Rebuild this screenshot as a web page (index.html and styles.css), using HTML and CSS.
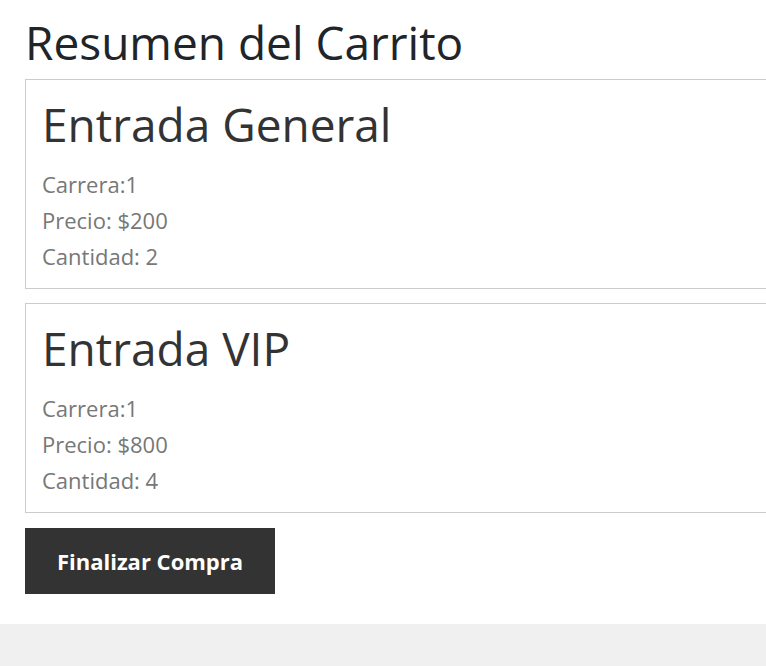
FILE: index.html
```html
<!DOCTYPE html>
<html lang="es">
<head>
<meta charset="utf-8">
<title>Resumen del Carrito</title>
<link rel="stylesheet" href="styles.css">
</head>
<body>
<main class="page">
  <h1 class="title">Resumen del Carrito</h1>
  <section class="card">
    <h2 class="card-title">Entrada General</h2>
    <p class="line">Carrera:1</p>
    <p class="line">Precio: $200</p>
    <p class="line">Cantidad: 2</p>
  </section>
  <section class="card">
    <h2 class="card-title">Entrada VIP</h2>
    <p class="line">Carrera:1</p>
    <p class="line">Precio: $800</p>
    <p class="line">Cantidad: 4</p>
  </section>
  <button class="checkout">Finalizar Compra</button>
</main>
</body>
</html>
```

FILE: styles.css
```css
html, body {
  margin: 0;
  padding: 0;
  overflow: hidden;
  background: #f0f0f0;
}
body {
  font-family: "Open Sans", "Noto Sans", sans-serif;
}
.page {
  background: #fff;
  width: 900px;
  padding: 14px 25px 30px;
  display: flex;
  flex-direction: column;
  align-items: flex-start;
}
.title {
  margin: 0 0 9px;
  font-size: 46px;
  font-weight: 400;
  line-height: 56px;
  color: #212529;
}
.card {
  align-self: stretch;
  border: 1px solid #ccc;
  padding: 12px 16px 14px;
  margin-bottom: 14px;
}
.card-title {
  margin: 0 0 10px;
  font-size: 46px;
  font-weight: 400;
  line-height: 64px;
  color: #333;
}
.line {
  margin: 0;
  font-size: 22px;
  line-height: 36px;
  color: #777;
}
.checkout {
  width: 250px;
  height: 66px;
  margin-top: 1px;
  border: 0;
  background: #333;
  color: #fff;
  font-family: inherit;
  font-size: 22px;
  font-weight: 700;
}
```
